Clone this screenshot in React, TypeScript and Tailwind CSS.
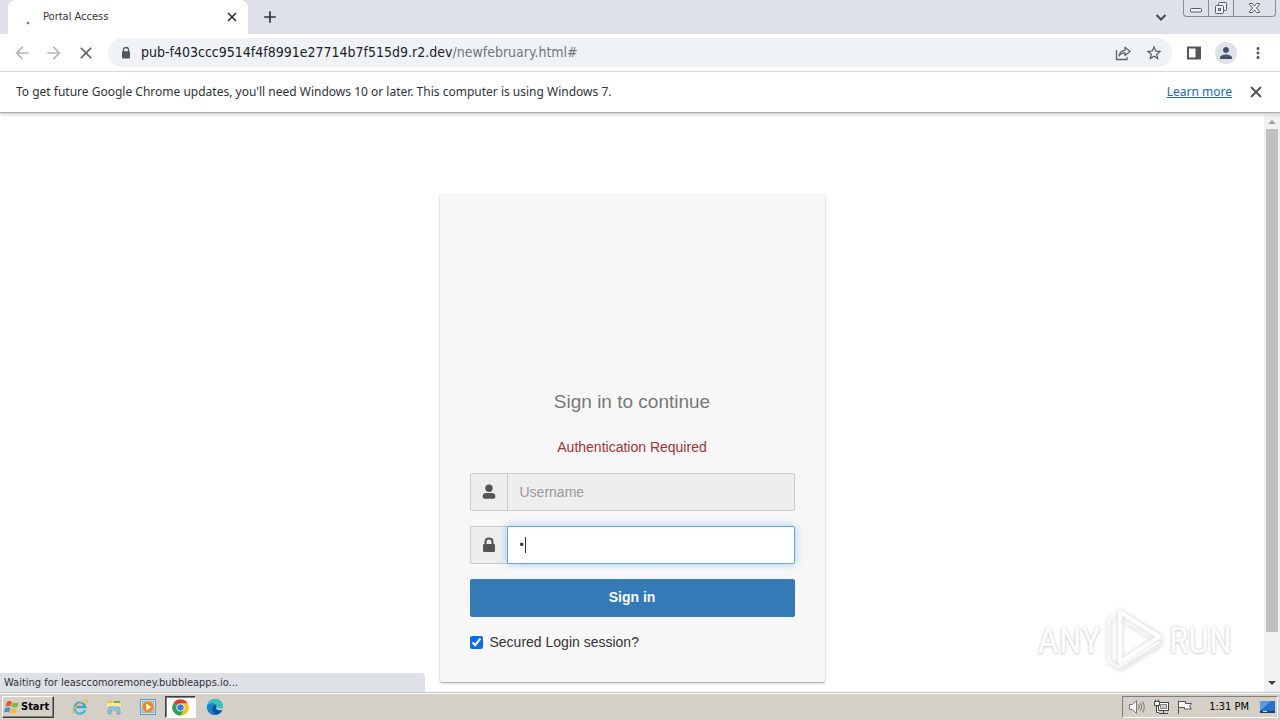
import React from "react";
import { MdStarOutline, MdMoreVert, MdArrowBack, MdArrowForward, MdClose, MdAdd, MdPerson } from "react-icons/md";

const iconButton = "flex shrink-0 items-center justify-center";

function WindowButtons() {
  return (
    <div className="mr-1 flex h-[17px] shrink-0 rounded-b-[4px] border border-t-0 border-[#868a91]">
      <button aria-label="Minimize" className="flex w-[25px] items-center justify-center border-r border-[#868a91]">
        <svg width="14" height="17" viewBox="0 0 14 17" fill="#f2f3f5" stroke="#555a66">
          <rect x="1.5" y="8.5" width="11" height="3.5" rx="1" />
        </svg>
      </button>
      <button aria-label="Restore" className="flex w-[25px] items-center justify-center border-r border-[#868a91]">
        <svg width="15" height="17" viewBox="0 0 15 17" fill="#eceef1" stroke="#555a66">
          <rect x="4.500" y="2.500" width="8" height="8" rx="1" />
          <rect x="1.500" y="5.500" width="8" height="8" rx="1" />
          <rect x="4.500" y="8.500" width="2" height="2" />
        </svg>
      </button>
      <button aria-label="Close window" className="flex w-[41px] items-center justify-center">
        <svg width="13" height="17" viewBox="0 0 13 17" fill="#f2f3f5" stroke="#555a66" strokeLinejoin="round">
          <path d="M1.500 3.500H4.500L6.500 6L8.500 3.500H11.500V4.500L8.500 8L11.500 11.500V12.500H8.500L6.500 10L4.500 12.500H1.500V11.500L4.500 8L1.500 4.500Z" />
        </svg>
      </button>
    </div>
  );
}

function TabStrip() {
  return (
    <div className="flex h-[34px] items-start bg-[#dee1e8] pl-2">
      <div className="flex h-[34px] w-60 items-center rounded-t-lg bg-white pr-2 pl-4">
        <svg width="16" height="16" viewBox="0 0 16 16" aria-hidden="true">
          <path d="M3 13.500L5 14.500" stroke="#3b78d8" strokeWidth="2" />
        </svg>
        <span className="ml-[3px] flex-1 truncate text-[11px]">Portal Access</span>
        <button aria-label="Close tab" className={iconButton}>
          <svg width="16" height="16" viewBox="0 0 16 16" stroke="#303338" strokeWidth="1.700">
            <path d="M4 4L12 12M12 4L4 12" />
          </svg>
        </button>
      </div>
      <button aria-label="New tab" className={`${iconButton} ml-3 h-[34px] w-5`}>
        <MdAdd size={20} color="#303338" />
      </button>
      <div className="flex-1" />
      <button aria-label="Search tabs" className={`${iconButton} mr-4 h-[34px] w-3`}>
        <svg width="12" height="12" viewBox="0 0 12 12" fill="none" stroke="#41454d" strokeWidth="2">
          <path d="M1.500 4L6 8.500L10.500 4" />
        </svg>
      </button>
      <WindowButtons />
    </div>
  );
}

function Toolbar() {
  return (
    <div className="flex h-[38px] items-center border-b border-[#d8dadd] bg-white pr-[13px] pl-3">
      <button aria-label="Back" className={`${iconButton} w-5`}><MdArrowBack size={20} color="#b5b7ba" /></button>
      <button aria-label="Forward" className={`${iconButton} ml-3 w-5`}><MdArrowForward size={20} color="#b5b7ba" /></button>
      <button aria-label="Stop loading" className={`${iconButton} ml-3 w-5`}><MdClose size={20} color="#5f6368" /></button>
      <div className="ml-3 flex h-[29px] min-w-0 flex-1 items-center rounded-full bg-[#f0f3f5] pr-[9px] pl-[11px]">
        <svg width="14" height="14" viewBox="0 0 14 14" aria-hidden="true">
          <path d="M4.500 6V3.800C4.500 2.300 5.500 1.500 7 1.500S9.500 2.300 9.500 3.800V6" fill="none" stroke="#54585d" strokeWidth="1.300" />
          <rect x="3" y="5.200" width="8" height="7.300" rx=".8" fill="#54585d" />
        </svg>
        <span className="ml-2 flex-1 truncate text-[14px] text-[#202124]">
          pub-f403ccc9514f4f8991e27714b7f515d9.r2.dev<span className="text-[#70757a]">/newfebruary.html#</span>
        </span>
        <button aria-label="Share" className={`${iconButton} w-4`}>
          <svg width="16" height="16" viewBox="0 0 16 16" fill="none" stroke="#5f6368" strokeWidth="1.300" strokeLinejoin="round">
            <path d="M1.500 5V14.500H12V12" />
            <path d="M4 11C4.500 7.500 6.500 5.500 10 5.300V2.300L15 6.500L10 10.500V7.800C7 7.800 5.300 8.800 4 11Z" />
          </svg>
        </button>
        <button aria-label="Bookmark this page" className={`${iconButton} ml-[14px] w-[18px]`}><MdStarOutline size={18} color="#54585d" /></button>
      </div>
      <button aria-label="Side panel" className={`${iconButton} ml-[14px] w-4`}>
        <svg width="16" height="16" viewBox="0 0 16 16">
          <path d="M1 1.500H15V14.500H1Z M3 3.500V12.500H9.500V3.500Z" fill="#54565b" fillRule="evenodd" />
        </svg>
      </button>
      <button aria-label="Profile" className={`${iconButton} ml-[13px] size-[22px] rounded-full bg-[#dfe2e8]`}><MdPerson size={18} color="#47536d" /></button>
      <button aria-label="Menu" className={`${iconButton} ml-3 w-[18px]`}><MdMoreVert size={18} color="#54585d" /></button>
    </div>
  );
}

function InfoBar() {
  return (
    <div className="relative z-10 flex h-10 items-center bg-white px-4 font-['Noto_Sans',sans-serif] text-[12px] text-[#303338] shadow-[0_1px_0_#a9a9a9,0_3px_3px_#d5d5d5]">
      <p className="flex-1 truncate">
        To get future Google Chrome updates, you'll need Windows 10 or later. This computer is using Windows 7.
      </p>
      <a href="#learn" className="text-[#2467b8] underline">Learn more</a>
      <button aria-label="Dismiss" className={`${iconButton} ml-4 w-4`}>
        <svg width="16" height="16" viewBox="0 0 16 16" stroke="#4c5055" strokeWidth="1.800">
          <path d="M3 3L13 13M13 3L3 13" />
        </svg>
      </button>
    </div>
  );
}

function LoginCard() {
  return (
    <form
      onSubmit={(e) => e.preventDefault()}
      className="mx-auto mt-[82px] w-[385px] rounded-[2px] bg-[#f7f7f7] px-[30px] pt-[194px] pb-[30px] font-['Liberation_Sans',Arial,sans-serif] text-[14px] text-[#333] shadow-[0_1px_2px_rgba(0,0,0,0.4)]"
    >
      <h1 className="text-center text-[19px] leading-7 text-[#777]">Sign in to continue</h1>
      <p className="mt-[21px] text-center leading-5 text-[#a03439]">Authentication Required</p>
      <div className="mt-4 flex h-[38px] rounded-[2px] border border-[#ccc] bg-[#eee]">
        <label htmlFor="username" aria-label="Username" className="flex w-9 items-center justify-center border-r border-[#ccc] box-content">
          <svg width="14" height="16" viewBox="0 0 14 16" fill="#555" aria-hidden="true">
            <circle cx="7" cy="4.200" r="3.700" />
            <path d="M4 9H10C12.400 9 13.300 10.500 13.300 12.500C13.300 14 12.700 14.700 11.500 14.700H2.500C1.300 14.700.7 14 .7 12.500C.7 10.500 1.600 9 4 9Z" />
          </svg>
        </label>
        <input id="username" placeholder="Username" className="min-w-0 flex-1 px-3 placeholder:text-[#999] focus:outline-none" />
      </div>
      <div className="mt-[15px] flex h-[38px]">
        <label htmlFor="password" aria-label="Password" className="flex w-[37px] items-center justify-center rounded-l-[2px] border border-r-0 border-[#ccc] bg-[#eee]">
          <svg width="14" height="16" viewBox="0 0 14 16" aria-hidden="true">
            <path d="M3.500 8V4.800C3.500 2.800 5 1.500 7 1.500S10.500 2.800 10.500 4.800V8" fill="none" stroke="#555" strokeWidth="2" />
            <rect x="1" y="7" width="12" height="8" rx="1.200" fill="#555" />
          </svg>
        </label>
        <div className="relative flex min-w-0 flex-1">
          <input
            id="password"
            type="password"
            defaultValue="a"
            className="min-w-0 flex-1 rounded-r-[2px] border border-[#66a5d8] bg-white px-3 text-[12px] shadow-[0_0_8px_rgba(102,175,233,0.6)] focus:outline-none"
          />
          <span aria-hidden="true" className="absolute top-[11px] left-[18px] h-4 w-px bg-[#333]" />
        </div>
      </div>
      <button type="submit" className="mt-[15px] h-[38px] w-full rounded-[2px] border border-[#337ab7] bg-[#337ab7] pb-[2px] text-center font-bold text-white">
        Sign in
      </button>
      <div className="mt-[15px] flex items-center gap-[7px]">
        <input id="secured" type="checkbox" defaultChecked className="size-[13px] accent-[#0b6cf0]" />
        <label htmlFor="secured" className="leading-5">Secured Login session?</label>
      </div>
    </form>
  );
}

function Scrollbar() {
  return (
    <div aria-hidden="true" className="flex w-4 shrink-0 flex-col items-center bg-[#f1f1f1]">
      <svg width="16" height="17" viewBox="0 0 16 17" fill="#a3a3a3"><path d="M4 12L8 8L12 12Z" /></svg>
      <div className="w-3 flex-[503] bg-[#c1c1c1]" />
      <div className="flex-[43]" />
      <svg width="16" height="17" viewBox="0 0 16 17" fill="#404040"><path d="M4 6L8 10L12 6Z" /></svg>
    </div>
  );
}

function Watermark() {
  return (
    <div className="absolute right-12 bottom-5 flex items-center gap-[3px] font-['Roboto_Condensed','Open_Sans_Condensed','Liberation_Sans_Narrow','Liberation_Sans',sans-serif] text-[37px] leading-none text-white [text-shadow:0_0_3px_#ccc,0_1px_2px_#d6d6d6]">
      <span>ANY</span>
      <svg width="62" height="64" viewBox="0 0 62 64" fill="none" strokeLinejoin="round" className="drop-shadow-[0_0_2px_#cccccc]">
        <path d="M16 4L56 28V37L16 61V55" stroke="#ededed" strokeWidth="3" />
        <path d="M16 4L55 29L16 54Z" stroke="#fff" strokeWidth="4" />
        <path d="M16 13L49 33" stroke="#e8e8e8" strokeWidth="1" />
        <path d="M10 9L5 12V53L14 59L55 34" stroke="#f9f9f9" strokeWidth="3" />
      </svg>
      <span>RUN</span>
    </div>
  );
}

function Taskbar() {
  return (
    <div className="flex h-7 shrink-0 items-center border-t border-[#c8c5be] bg-[#d4d0c8] text-[11px] text-black shadow-[inset_0_1px_0_#fff]">
      <button className="mt-px ml-[2px] flex h-[22px] w-[52px] items-center gap-[1px] border border-t-white border-r-[#404040] border-b-[#404040] border-l-white pl-[1px] font-bold shadow-[inset_-1px_-1px_0_#808080]">
        <svg width="16" height="16" viewBox="0 0 16 16" className="shrink-0">
          <path d="M3 3C5 1.500 6.500 2 8 3L6.500 7.500C5 6.500 3.500 6.500 1.500 7.500Z" fill="#e8542a" />
          <path d="M9 3.500C11 4.500 13 4.500 15 3L13.500 7.500C11.500 9 9.500 8.500 7.500 7.500Z" fill="#78b935" />
          <path d="M1.200 9C3 8 5 8 6.300 9L5 13.500C3.500 12.500 2 12.500 0 13.500Z" fill="#3d8fd8" />
          <path d="M7.200 9.500C9 10.500 11 10.500 13 9.500L11.500 14C9.500 15 7.500 14.500 5.800 13.500Z" fill="#f5bb25" />
        </svg>
        <span>Start</span>
      </button>
      <button aria-label="Internet Explorer" className={`${iconButton} ml-[17px] w-[18px]`}>
        <svg width="18" height="18" viewBox="0 0 18 18" fill="none">
          <path d="M14 12A5.500 5.500 0 1 1 14.300 9H5" stroke="#3ba5da" strokeWidth="2.400" />
          <path d="M13.500 12A5.500 5.500 0 0 1 4 12.500" stroke="#7ed0f2" strokeWidth="1" />
          <path d="M2.500 16C-.5 13 6 6 12 3C16 1 18 2 15.500 6" stroke="#efbd3c" strokeWidth="1.300" />
        </svg>
      </button>
      <button aria-label="File Explorer" className={`${iconButton} ml-4 w-[18px]`}>
        <svg width="18" height="18" viewBox="0 0 18 18">
          <path d="M2 3L7 2L8 4H15V14H2Z" fill="#e8c55b" />
          <path d="M9 3H15V7H9Z" fill="#69ac51" />
          <path d="M2 5H16V13H2Z" fill="#f7e69b" />
          <path d="M3 16V11Q3 9 5 9H13Q15 9 15 11V16H12V12H6V16Z" fill="#8fc7e6" stroke="#4c91bc" strokeWidth=".6" />
        </svg>
      </button>
      <button aria-label="Media Player" className={`${iconButton} ml-4 w-[18px]`}>
        <svg width="18" height="18" viewBox="0 0 18 18">
          <rect x="1.500" y="1.500" width="15" height="15" fill="#c7e1f3" stroke="#5f9acb" />
          <rect x="3.500" y="3.500" width="11" height="11" fill="#b4d3ea" stroke="#8db9dc" />
          <circle cx="9" cy="9" r="5.700" fill="#ee861c" stroke="#f9b35d" strokeWidth=".6" />
          <path d="M7.300 5.500L12.500 9L7.300 12.500Z" fill="#fff" />
        </svg>
      </button>
      <button aria-label="Google Chrome" className={`${iconButton} mt-px ml-2 h-[22px] w-[31px] border border-t-[#404040] border-r-white border-b-white border-l-[#404040] bg-white shadow-[inset_1px_1px_0_#808080]`}>
        <svg width="17" height="17" viewBox="0 0 48 48">
          <path d="M24 24L4 12A23 23 0 0 1 44 12Z" fill="#e33b2e" />
          <path d="M24 24L44 12A23 23 0 0 1 24 47Z" fill="#fbc116" />
          <path d="M24 24V47A23 23 0 0 1 4 12Z" fill="#2ba24c" />
          <path d="M24 12H44L34 29Z" fill="#fbc116" />
          <path d="M34 29L24 47L14 29Z" fill="#2ba24c" />
          <circle cx="24" cy="24" r="11.500" fill="#fff" />
          <circle cx="24" cy="24" r="9" fill="#3c78e7" />
        </svg>
      </button>
      <button aria-label="Microsoft Edge" className={`${iconButton} ml-[10px] w-[18px]`}>
        <svg width="18" height="18" viewBox="0 0 18 18">
          <circle cx="9" cy="9" r="8" fill="#1679cf" />
          <path d="M1 8C2 3 6 1 9 1C14 1 17 5 17 8C17 11 14 12 11 11C12 8 9 5 6 5.500C3 6 1.500 8 1 8Z" fill="#37c4b5" />
          <path d="M1 8C3 4 8 5 10 7C6 7 5 12 10 16.500C4 18 0 12 1 8Z" fill="#1386d5" />
          <path d="M11 8C9 10 10 14 16 12.500C14 16 11 17 9 16C5 13 6 8 9 7Z" fill="#134f9b" />
          <path d="M10.500 8C9.500 11 11 12.500 17.500 12V9.500C16 11.500 11 11 10.500 8Z" fill="#d4d0c8" />
        </svg>
      </button>
      <div className="flex-1" />
      <div className="mt-px mr-[2px] flex h-[22px] items-center border border-t-[#808080] border-r-white border-b-white border-l-[#808080] pr-px pl-[5px]">
        <button aria-label="Volume" className={iconButton}>
          <svg width="18" height="16" viewBox="0 0 18 16" fill="none" stroke="#777">
            <path d="M1.500 5.500H4.500L8.500 1.500V14.500L4.500 10.500H1.500Z" fill="#fff" />
            <path d="M10.500 5.500Q12 8 10.500 10.500M12.500 4Q15 8 12.500 12M14.500 2.500Q18 8 14.500 13.500" />
          </svg>
        </button>
        <button aria-label="Network" className={`${iconButton} ml-[7px]`}>
          <svg width="17" height="16" viewBox="0 0 17 16" fill="#fff" stroke="#444">
            <rect x="5.500" y="3.500" width="10" height="8" />
            <rect x="7.500" y="5.500" width="6" height="4" fill="#c9c9c9" stroke="#888" />
            <path d="M10.500 12V14M6 14.500H15" />
            <path d="M1.500 2.500H6.500V6.500H1.500ZM2.500 .5V2.500M5.500 .5V2.500M3.500 6.500V13.500H6" />
          </svg>
        </button>
        <button aria-label="Action Center" className={`${iconButton} ml-[7px]`}>
          <svg width="16" height="16" viewBox="0 0 16 16" fill="#fff" stroke="#555">
            <path d="M1.500 15V1.500M2 2.500H8.500V4.500H14.500L12.500 7L14.500 10H7.500V8.500H2" />
          </svg>
        </button>
        <time className="ml-4">1:31 PM</time>
        <button aria-label="Show desktop" className={`${iconButton} ml-[10px]`}>
          <svg width="17" height="14" viewBox="0 0 17 14">
            <path d="M1 1H16V11H1Z" fill="#2672ca" />
            <path d="M1 1H12L2 10H1Z" fill="#589be0" />
            <path d="M1 11H16V13H1Z" fill="#243c64" />
            <path d="M4 11.500H8" stroke="#cce1f7" />
          </svg>
        </button>
      </div>
    </div>
  );
}

export default function App() {
  return (
    <div className="flex h-screen flex-col overflow-hidden bg-white font-['DejaVu_Sans_Condensed','DejaVu_Sans',sans-serif] text-[#303338]">
      <header className="shrink-0">
        <TabStrip />
        <Toolbar />
        <InfoBar />
      </header>
      <div className="relative flex min-h-0 flex-1">
        <main className="min-w-0 flex-1 overflow-hidden">
          <LoginCard />
        </main>
        <Scrollbar />
        <Watermark />
        <div role="status" className="absolute bottom-0 left-0 flex h-[19px] w-[425px] items-center rounded-tr-[4px] bg-[#dee1e6] px-1 pt-[2px] text-[11px]">
          Waiting for leasccomoremoney.bubbleapps.io...
        </div>
      </div>
      <Taskbar />
    </div>
  );
}
